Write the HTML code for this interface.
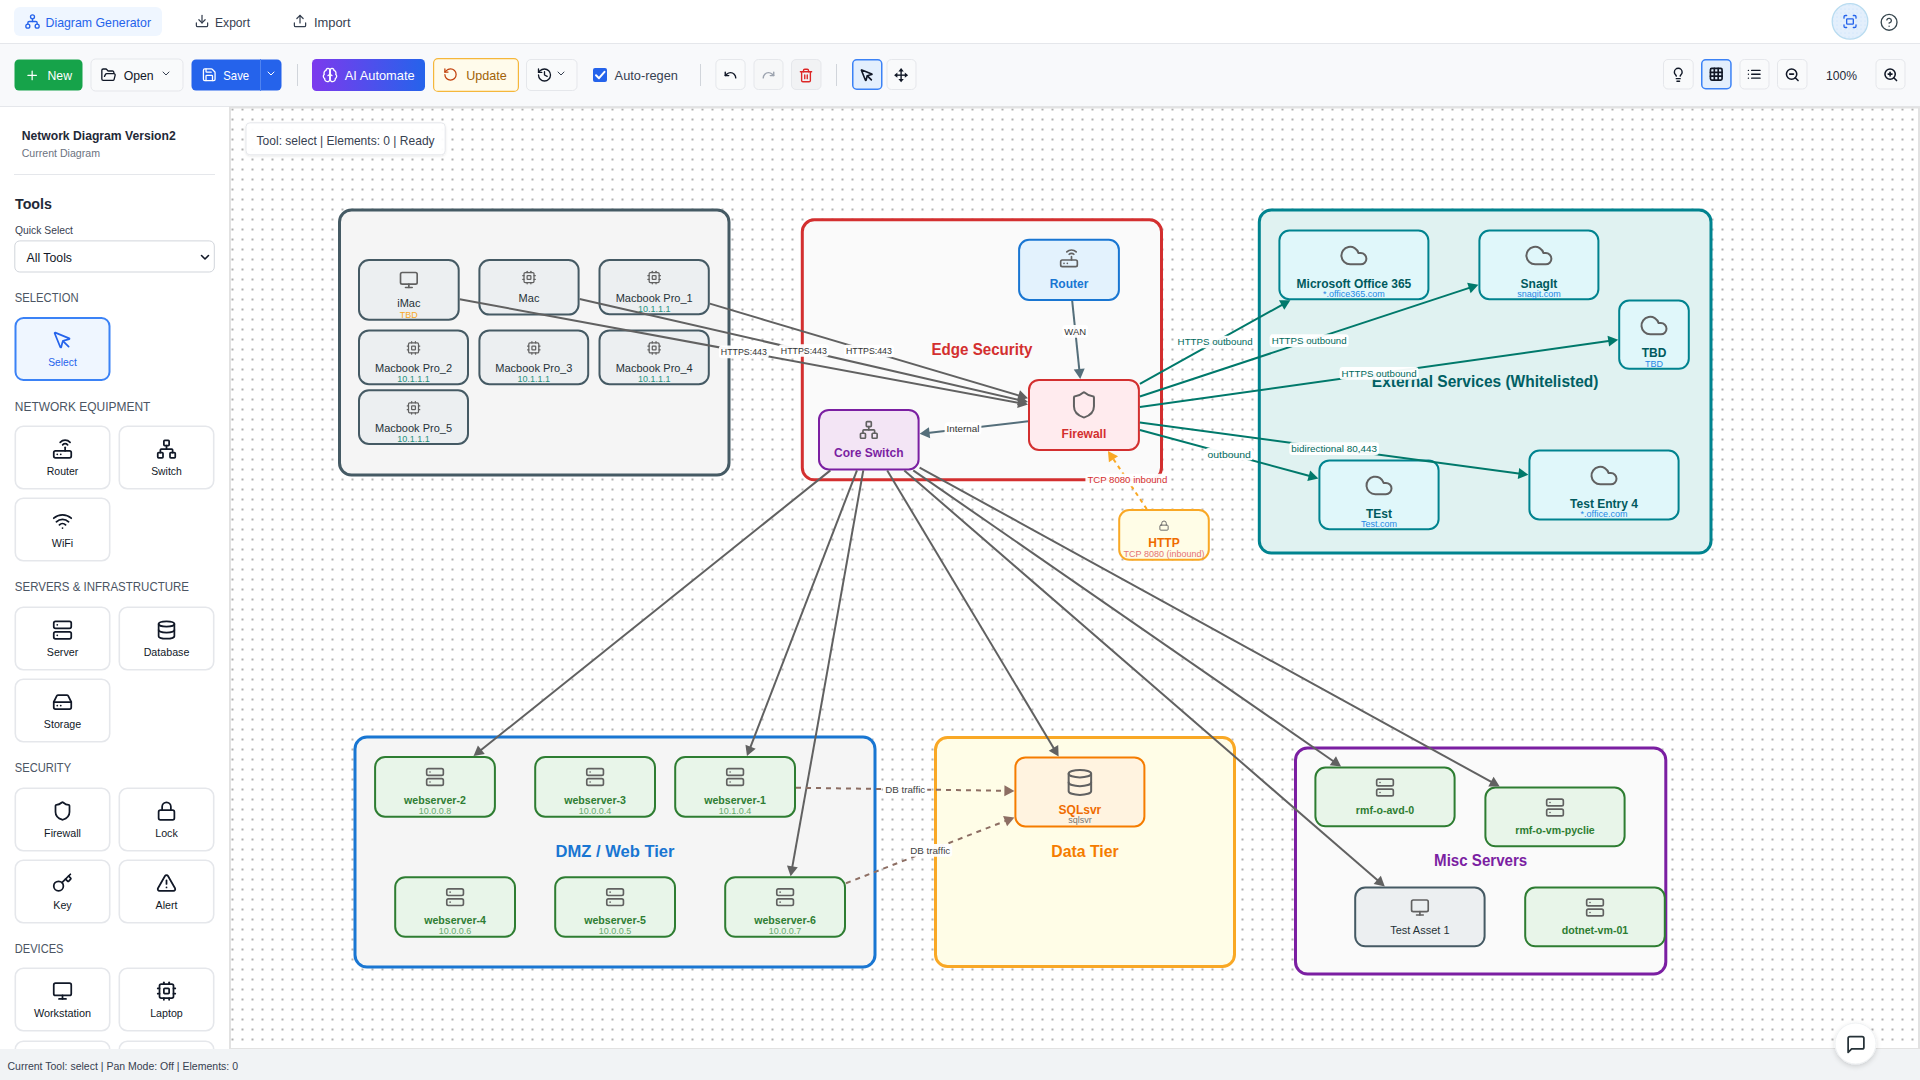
<!DOCTYPE html>
<html><head><meta charset="utf-8"><title>Diagram Generator</title><style>html,body{margin:0;padding:0;width:1920px;height:1080px;overflow:hidden;background:#fff}</style></head><body>
<svg width="1920" height="1080" viewBox="0 0 1920 1080" font-family='"Liberation Sans", sans-serif' style="display:block">
<defs>
<pattern id="dots" x="231.5" y="108.5" width="10" height="10" patternUnits="userSpaceOnUse"><circle cx="1" cy="1" r="0.9" fill="#8a8a8a"/></pattern>
<pattern id="dots2" x="0" y="0" width="4" height="4" patternUnits="userSpaceOnUse"><circle cx="1" cy="1" r="0.5" fill="#93c5fd" fill-opacity="0.5"/></pattern>
<linearGradient id="aigrad" x1="0" x2="1" y1="0" y2="0"><stop offset="0" stop-color="#7c3aed"/><stop offset="1" stop-color="#2563eb"/></linearGradient>
<filter id="sh" x="-20%" y="-20%" width="140%" height="160%"><feDropShadow dx="0" dy="1" stdDeviation="1.2" flood-color="#000" flood-opacity="0.10"/></filter>
<filter id="sh2" x="-50%" y="-50%" width="200%" height="200%"><feDropShadow dx="0" dy="2" stdDeviation="2.5" flood-color="#000" flood-opacity="0.15"/></filter>
</defs>
<rect x="0" y="0" width="1920" height="43" rx="0" fill="#ffffff" stroke="none" stroke-width="1"/>
<rect x="0" y="43" width="1920" height="1" rx="0" fill="#e5e7eb" stroke="none" stroke-width="1"/>
<rect x="0" y="44" width="1920" height="62" rx="0" fill="#f8f9fb" stroke="none" stroke-width="1"/>
<rect x="0" y="106" width="1920" height="1" rx="0" fill="#e5e7eb" stroke="none" stroke-width="1"/>
<rect x="0" y="107" width="229" height="943" rx="0" fill="#ffffff" stroke="none" stroke-width="1"/>
<rect x="0" y="1049" width="1920" height="31" rx="0" fill="#f1f3f5" stroke="none" stroke-width="1"/>
<rect x="229" y="106.5" width="1691" height="943" rx="0" fill="#e2e2e2" stroke="none" stroke-width="1"/>
<rect x="231" y="108.5" width="1687" height="939.5" rx="0" fill="#ffffff" stroke="none" stroke-width="1"/>
<rect x="231" y="108.5" width="1687" height="939.5" rx="0" fill="url(#dots)" stroke="none" stroke-width="1"/>
<rect x="14.0" y="7.0" width="148" height="29" rx="6" fill="#eff6ff" stroke="none" stroke-width="0"/>
<svg x="24.5" y="13.5" width="16" height="16" viewBox="0 0 24 24" fill="none" stroke="#2563eb" stroke-width="2" stroke-linecap="round" stroke-linejoin="round"><circle cx="12" cy="5" r="3"/><circle cx="5" cy="19" r="3"/><circle cx="19" cy="19" r="3"/><path d="M12 8v4"/><path d="M5 16v-2a2 2 0 0 1 2-2h10a2 2 0 0 1 2 2v2"/></svg>
<text x="45.5" y="27" font-size="13" fill="#2563eb" font-weight="normal" text-anchor="start" textLength="105.5" lengthAdjust="spacingAndGlyphs">Diagram Generator</text>
<svg x="194.5" y="13.5" width="15" height="15" viewBox="0 0 24 24" fill="none" stroke="#374151" stroke-width="2" stroke-linecap="round" stroke-linejoin="round"><path d="M21 15v4a2 2 0 0 1-2 2H5a2 2 0 0 1-2-2v-4"/><polyline points="7 10 12 15 17 10"/><line x1="12" x2="12" y1="15" y2="3"/></svg>
<text x="215" y="27" font-size="13" fill="#374151" font-weight="normal" text-anchor="start" textLength="35" lengthAdjust="spacingAndGlyphs">Export</text>
<svg x="292.5" y="13.5" width="15" height="15" viewBox="0 0 24 24" fill="none" stroke="#374151" stroke-width="2" stroke-linecap="round" stroke-linejoin="round"><path d="M21 15v4a2 2 0 0 1-2 2H5a2 2 0 0 1-2-2v-4"/><polyline points="17 8 12 3 7 8"/><line x1="12" x2="12" y1="3" y2="15"/></svg>
<text x="313.9" y="27" font-size="13" fill="#374151" font-weight="normal" text-anchor="start" textLength="36.6" lengthAdjust="spacingAndGlyphs">Import</text>
<circle cx="1850" cy="21.4" r="17.8" fill="#e3effc" stroke="#b9dcf0" stroke-width="1.3"/>
<circle cx="1850" cy="21.5" r="17.5" fill="url(#dots2)"/>
<svg x="1842" y="13.5" width="16" height="16" viewBox="0 0 24 24" fill="none" stroke="#2563eb" stroke-width="2" stroke-linecap="round" stroke-linejoin="round"><path d="M3 7V5a2 2 0 0 1 2-2h2"/><path d="M17 3h2a2 2 0 0 1 2 2v2"/><path d="M21 17v2a2 2 0 0 1-2 2h-2"/><path d="M7 21H5a2 2 0 0 1-2-2v-2"/><rect width="10" height="8" x="7" y="8" rx="1"/></svg>
<svg x="1879.6" y="12.8" width="19" height="19" viewBox="0 0 24 24" fill="none" stroke="#37474f" stroke-width="1.7" stroke-linecap="round" stroke-linejoin="round"><circle cx="12" cy="12" r="10"/><path d="M9.09 9a3 3 0 0 1 5.83 1c0 2-3 3-3 3"/><path d="M12 17h.01"/></svg>
<rect x="14.5" y="59.5" width="68" height="31" rx="4.5" fill="#16a34a" stroke="none" stroke-width="1"/>
<svg x="24.8" y="68" width="14.7" height="14.7" viewBox="0 0 24 24" fill="none" stroke="#ffffff" stroke-width="2" stroke-linecap="round" stroke-linejoin="round"><path d="M5 12h14"/><path d="M12 5v14"/></svg>
<text x="47.5" y="80" font-size="13" fill="#ffffff" font-weight="normal" text-anchor="start" textLength="24.5" lengthAdjust="spacingAndGlyphs">New</text>
<rect x="91.0" y="59.0" width="92.0" height="32.0" rx="4.5" fill="#f9fafb" stroke="#e5e7eb" stroke-width="1"/>
<svg x="100.5" y="67" width="16" height="16" viewBox="0 0 24 24" fill="none" stroke="#111827" stroke-width="2" stroke-linecap="round" stroke-linejoin="round"><path d="m6 14 1.5-2.9A2 2 0 0 1 9.24 10H20a2 2 0 0 1 1.94 2.5l-1.54 6a2 2 0 0 1-1.95 1.5H4a2 2 0 0 1-2-2V5a2 2 0 0 1 2-2h3.9a2 2 0 0 1 1.69.9l.81 1.2a2 2 0 0 0 1.67.9H18a2 2 0 0 1 2 2v2"/></svg>
<text x="123.7" y="80" font-size="13" fill="#111827" font-weight="normal" text-anchor="start" textLength="30" lengthAdjust="spacingAndGlyphs">Open</text>
<svg x="160" y="67.5" width="12" height="12" viewBox="0 0 24 24" fill="none" stroke="#374151" stroke-width="2" stroke-linecap="round" stroke-linejoin="round"><path d="m6 9 6 6 6-6"/></svg>
<rect x="191.5" y="59.5" width="90" height="31" rx="4.5" fill="#2563eb" stroke="none" stroke-width="1"/>
<rect x="260" y="59" width="1" height="32" rx="0" fill="#4f83f0" stroke="none" stroke-width="1"/>
<svg x="201.5" y="67" width="15.5" height="15.5" viewBox="0 0 24 24" fill="none" stroke="#ffffff" stroke-width="2" stroke-linecap="round" stroke-linejoin="round"><path d="M15.2 3a2 2 0 0 1 1.4.6l3.8 3.8a2 2 0 0 1 .6 1.4V19a2 2 0 0 1-2 2H5a2 2 0 0 1-2-2V5a2 2 0 0 1 2-2z"/><path d="M17 21v-7a1 1 0 0 0-1-1H8a1 1 0 0 0-1 1v7"/><path d="M7 3v4a1 1 0 0 0 1 1h7"/></svg>
<text x="223.3" y="80" font-size="13" fill="#ffffff" font-weight="normal" text-anchor="start" textLength="25.9" lengthAdjust="spacingAndGlyphs">Save</text>
<svg x="265" y="67.5" width="12" height="12" viewBox="0 0 24 24" fill="none" stroke="#ffffff" stroke-width="2" stroke-linecap="round" stroke-linejoin="round"><path d="m6 9 6 6 6-6"/></svg>
<rect x="297" y="64" width="1" height="22" rx="0" fill="#d1d5db" stroke="none" stroke-width="1"/>
<rect x="312" y="59" width="113" height="32" rx="4.5" fill="url(#aigrad)"/>
<svg x="322" y="67" width="16" height="16" viewBox="0 0 24 24" fill="none" stroke="#ffffff" stroke-width="2" stroke-linecap="round" stroke-linejoin="round"><path d="M12 5a3 3 0 1 0-5.997.125 4 4 0 0 0-2.526 5.77 4 4 0 0 0 .556 6.588A4 4 0 1 0 12 18Z"/><path d="M12 5a3 3 0 1 1 5.997.125 4 4 0 0 1 2.526 5.77 4 4 0 0 1-.556 6.588A4 4 0 1 1 12 18Z"/><path d="M15 13a4.5 4.5 0 0 1-3-4 4.5 4.5 0 0 1-3 4"/><path d="M12 5v13"/></svg>
<text x="344.8" y="80" font-size="13" fill="#ffffff" font-weight="normal" text-anchor="start" textLength="69.8" lengthAdjust="spacingAndGlyphs">AI Automate</text>
<rect x="433.6" y="58.6" width="84.8" height="32.8" rx="4.5" fill="#fffbeb" stroke="#f5b73b" stroke-width="1.2"/>
<svg x="443" y="67" width="15" height="15" viewBox="0 0 24 24" fill="none" stroke="#c2410c" stroke-width="2" stroke-linecap="round" stroke-linejoin="round"><path d="M3 12a9 9 0 1 0 9-9 9.75 9.75 0 0 0-6.74 2.74L3 8"/><path d="M3 3v5h5"/></svg>
<text x="466.25" y="80" font-size="13" fill="#a16207" font-weight="normal" text-anchor="start" textLength="40.5" lengthAdjust="spacingAndGlyphs">Update</text>
<rect x="526.5" y="59.5" width="50.5" height="31" rx="4.5" fill="#f9fafb" stroke="#e5e7eb" stroke-width="1"/>
<svg x="536.5" y="67" width="16" height="16" viewBox="0 0 24 24" fill="none" stroke="#111827" stroke-width="2" stroke-linecap="round" stroke-linejoin="round"><path d="M3 12a9 9 0 1 0 9-9 9.75 9.75 0 0 0-6.74 2.74L3 8"/><path d="M3 3v5h5"/><path d="M12 7v5l4 2"/></svg>
<svg x="555" y="67.5" width="12" height="12" viewBox="0 0 24 24" fill="none" stroke="#374151" stroke-width="2" stroke-linecap="round" stroke-linejoin="round"><path d="m6 9 6 6 6-6"/></svg>
<rect x="593.0" y="68.0" width="14" height="14" rx="2" fill="#2563eb" stroke="none" stroke-width="0"/>
<path d="M596 75.2 L599 78.2 L604.5 71.8" fill="none" stroke="#fff" stroke-width="2" stroke-linecap="round" stroke-linejoin="round"/>
<text x="614.6" y="80" font-size="13" fill="#374151" font-weight="normal" text-anchor="start" textLength="63.4" lengthAdjust="spacingAndGlyphs">Auto-regen</text>
<rect x="700" y="64" width="1" height="22" rx="0" fill="#d1d5db" stroke="none" stroke-width="1"/>
<rect x="715.9" y="59.5" width="29.200000000000045" height="30" rx="4.5" fill="#f9fafb" stroke="#e5e7eb" stroke-width="1"/>
<svg x="723.5" y="68" width="14" height="14" viewBox="0 0 24 24" fill="none" stroke="#111827" stroke-width="2.4" stroke-linecap="round" stroke-linejoin="round"><path d="M3 7v6h6"/><path d="M21 17a9 9 0 0 0-9-9 9 9 0 0 0-6 2.3L3 13"/></svg>
<rect x="754.0" y="59.5" width="29.0" height="30" rx="4.5" fill="#f6f7f8" stroke="#e5e7eb" stroke-width="1"/>
<svg x="761.5" y="68" width="14" height="14" viewBox="0 0 24 24" fill="none" stroke="#9ca3af" stroke-width="2.4" stroke-linecap="round" stroke-linejoin="round"><path d="M21 7v6h-6"/><path d="M3 17a9 9 0 0 1 9-9 9 9 0 0 1 6 2.3l3 2.7"/></svg>
<rect x="791.5" y="59.5" width="29.5" height="30" rx="4.5" fill="#f1f2f4" stroke="#e5e7eb" stroke-width="1"/>
<svg x="798.5" y="68" width="15" height="15" viewBox="0 0 24 24" fill="none" stroke="#dc2626" stroke-width="2.2" stroke-linecap="round" stroke-linejoin="round"><path d="M3 6h18"/><path d="M19 6v14c0 1-1 2-2 2H7c-1 0-2-1-2-2V6"/><path d="M8 6V4c0-1 1-2 2-2h4c1 0 2 1 2 2v2"/><line x1="10" x2="10" y1="11" y2="17"/><line x1="14" x2="14" y1="11" y2="17"/></svg>
<rect x="836" y="64" width="1" height="22" rx="0" fill="#d1d5db" stroke="none" stroke-width="1"/>
<rect x="852.75" y="59.75" width="29.0" height="29.5" rx="4" fill="#e3effd" stroke="#3b82f6" stroke-width="1.5"/>
<svg x="859.5" y="68" width="15" height="15" viewBox="0 0 24 24" fill="none" stroke="#111827" stroke-width="2.6" stroke-linecap="round" stroke-linejoin="round"><path d="M12.586 12.586 19 19"/><path d="M3.688 3.037a.497.497 0 0 0-.651.651l6.5 15.999a.501.501 0 0 0 .947-.062l1.569-6.083a2 2 0 0 1 1.448-1.479l6.124-1.579a.5.5 0 0 0 .063-.947z"/></svg>
<rect x="887.0" y="59.5" width="29.0" height="30" rx="4.5" fill="#f9fafb" stroke="#e5e7eb" stroke-width="1"/>
<g fill="#111827" stroke="#111827" stroke-width="1.4"><line x1="901.1" y1="70" x2="901.1" y2="80.3"/><line x1="895.9" y1="75.15" x2="906.3" y2="75.15"/></g><g fill="#111827"><polygon points="901.1,68.1 898.4,71.4 903.8,71.4"/><polygon points="901.1,82.2 898.4,78.9 903.8,78.9"/><polygon points="894.1,75.15 897.4,72.45 897.4,77.85"/><polygon points="908.1,75.15 904.8,72.45 904.8,77.85"/></g>
<rect x="1663.5" y="59.5" width="29.700000000000045" height="29.5" rx="4.5" fill="#f9fafb" stroke="#e5e7eb" stroke-width="1"/>
<svg x="1670.5" y="67" width="15.5" height="15.5" viewBox="0 0 24 24" fill="none" stroke="#111827" stroke-width="2.2" stroke-linecap="round" stroke-linejoin="round"><path d="M15 14c.2-1 .7-1.7 1.5-2.5 1-.9 1.5-2.2 1.5-3.5A6 6 0 0 0 6 8c0 1 .2 2.2 1.5 3.5.7.7 1.3 1.5 1.5 2.5"/><path d="M9 18h6"/><path d="M10 22h4"/></svg>
<rect x="1701.75" y="59.75" width="29.200000000000045" height="29.0" rx="4" fill="#e3effd" stroke="#3b82f6" stroke-width="1.5"/>
<svg x="1708.5" y="66.5" width="15.5" height="15.5" viewBox="0 0 24 24" fill="none" stroke="#111827" stroke-width="2.6" stroke-linecap="round" stroke-linejoin="round"><rect width="18" height="18" x="3" y="3" rx="2"/><path d="M3 9h18"/><path d="M3 15h18"/><path d="M9 3v18"/><path d="M15 3v18"/></svg>
<rect x="1740.0" y="59.5" width="29.0" height="29.5" rx="4.5" fill="#f9fafb" stroke="#e5e7eb" stroke-width="1"/>
<svg x="1746.5" y="66.5" width="15.5" height="15.5" viewBox="0 0 24 24" fill="none" stroke="#111827" stroke-width="2.2" stroke-linecap="round" stroke-linejoin="round"><path d="M3 12h.01"/><path d="M3 18h.01"/><path d="M3 6h.01"/><path d="M8 12h13"/><path d="M8 18h13"/><path d="M8 6h13"/></svg>
<rect x="1777.5" y="59.5" width="29.5" height="29.5" rx="4.5" fill="#f9fafb" stroke="#e5e7eb" stroke-width="1"/>
<svg x="1784.5" y="67" width="15.5" height="15.5" viewBox="0 0 24 24" fill="none" stroke="#111827" stroke-width="2.4" stroke-linecap="round" stroke-linejoin="round"><circle cx="11" cy="11" r="8"/><line x1="21" x2="16.65" y1="21" y2="16.65"/><line x1="8" x2="14" y1="11" y2="11"/></svg>
<text x="1826" y="80" font-size="13" fill="#1f2937" font-weight="normal" text-anchor="start" textLength="31" lengthAdjust="spacingAndGlyphs">100%</text>
<rect x="1876.0" y="59.5" width="29.0" height="29.5" rx="4.5" fill="#f9fafb" stroke="#e5e7eb" stroke-width="1"/>
<svg x="1883" y="67" width="15.5" height="15.5" viewBox="0 0 24 24" fill="none" stroke="#111827" stroke-width="2.4" stroke-linecap="round" stroke-linejoin="round"><circle cx="11" cy="11" r="8"/><line x1="21" x2="16.65" y1="21" y2="16.65"/><line x1="11" x2="11" y1="8" y2="14"/><line x1="8" x2="14" y1="11" y2="11"/></svg>
<text x="21.7" y="140" font-size="13.5" fill="#1f2937" font-weight="bold" text-anchor="start" textLength="154" lengthAdjust="spacingAndGlyphs">Network Diagram Version2</text>
<text x="21.7" y="157" font-size="11" fill="#6b7280" font-weight="normal" text-anchor="start" textLength="78.3" lengthAdjust="spacingAndGlyphs">Current Diagram</text>
<rect x="14" y="174" width="201" height="1" rx="0" fill="#e5e7eb" stroke="none" stroke-width="1"/>
<text x="15" y="209" font-size="15.5" fill="#1f2937" font-weight="bold" text-anchor="start" textLength="37" lengthAdjust="spacingAndGlyphs">Tools</text>
<text x="15" y="234" font-size="11.6" fill="#374151" font-weight="normal" text-anchor="start" textLength="58" lengthAdjust="spacingAndGlyphs">Quick Select</text>
<rect x="14.8" y="240.9" width="199.5" height="31.099999999999994" rx="5" fill="#ffffff" stroke="#d1d5db" stroke-width="1"/>
<text x="26.5" y="262" font-size="13.5" fill="#111827" font-weight="normal" text-anchor="start" textLength="45.5" lengthAdjust="spacingAndGlyphs">All Tools</text>
<path d="M201.5 255.5 L205 259 L208.5 255.5" fill="none" stroke="#111827" stroke-width="1.6" stroke-linecap="round" stroke-linejoin="round"/>
<text x="14.8" y="301.8" font-size="13" fill="#4b5563" font-weight="normal" text-anchor="start" textLength="63.7" lengthAdjust="spacingAndGlyphs">SELECTION</text>
<rect x="15.5" y="318.0" width="94.0" height="62" rx="8" fill="#eff6ff" stroke="#3b82f6" stroke-width="2"/>
<svg x="52.0" y="330" width="21" height="21" viewBox="0 0 24 24" fill="none" stroke="#2563eb" stroke-width="2" stroke-linecap="round" stroke-linejoin="round"><path d="M12.586 12.586 19 19"/><path d="M3.688 3.037a.497.497 0 0 0-.651.651l6.5 15.999a.501.501 0 0 0 .947-.062l1.569-6.083a2 2 0 0 1 1.448-1.479l6.124-1.579a.5.5 0 0 0 .063-.947z"/></svg>
<text x="62.5" y="366.2" font-size="11.3" fill="#2563eb" font-weight="normal" text-anchor="middle" textLength="28.5" lengthAdjust="spacingAndGlyphs">Select</text>
<text x="14.8" y="410.8" font-size="13" fill="#4b5563" font-weight="normal" text-anchor="start" textLength="135.6" lengthAdjust="spacingAndGlyphs">NETWORK EQUIPMENT</text>
<rect x="15.3" y="426.3" width="94.4" height="62.4" rx="8" fill="#ffffff" stroke="#e5e7eb" stroke-width="1.6"/>
<svg x="52.0" y="438.5" width="21" height="21" viewBox="0 0 24 24" fill="none" stroke="#111827" stroke-width="2" stroke-linecap="round" stroke-linejoin="round"><rect width="20" height="8" x="2" y="14" rx="2"/><path d="M6.01 18H6"/><path d="M10.01 18H10"/><path d="M15 10v4"/><path d="M17.84 7.17a4 4 0 0 0-5.66 0"/><path d="M20.66 4.34a8 8 0 0 0-11.31 0"/></svg>
<text x="62.5" y="474.7" font-size="11.3" fill="#111827" font-weight="normal" text-anchor="middle" textLength="31.5" lengthAdjust="spacingAndGlyphs">Router</text>
<rect x="119.3" y="426.3" width="94.4" height="62.4" rx="8" fill="#ffffff" stroke="#e5e7eb" stroke-width="1.6"/>
<svg x="156.0" y="438.5" width="21" height="21" viewBox="0 0 24 24" fill="none" stroke="#111827" stroke-width="2" stroke-linecap="round" stroke-linejoin="round"><rect x="16" y="16" width="6" height="6" rx="1"/><rect x="2" y="16" width="6" height="6" rx="1"/><rect x="9" y="2" width="6" height="6" rx="1"/><path d="M5 16v-3a1 1 0 0 1 1-1h12a1 1 0 0 1 1 1v3"/><path d="M12 12V8"/></svg>
<text x="166.5" y="474.7" font-size="11.3" fill="#111827" font-weight="normal" text-anchor="middle" textLength="30.6" lengthAdjust="spacingAndGlyphs">Switch</text>
<rect x="15.3" y="498.3" width="94.4" height="62.4" rx="8" fill="#ffffff" stroke="#e5e7eb" stroke-width="1.6"/>
<svg x="52.0" y="510.5" width="21" height="21" viewBox="0 0 24 24" fill="none" stroke="#111827" stroke-width="2" stroke-linecap="round" stroke-linejoin="round"><path d="M12 20h.01"/><path d="M2 8.82a15 15 0 0 1 20 0"/><path d="M5 12.859a10 10 0 0 1 14 0"/><path d="M8.5 16.429a5 5 0 0 1 7 0"/></svg>
<text x="62.5" y="546.7" font-size="11.3" fill="#111827" font-weight="normal" text-anchor="middle" textLength="21.35" lengthAdjust="spacingAndGlyphs">WiFi</text>
<text x="14.8" y="591" font-size="13" fill="#4b5563" font-weight="normal" text-anchor="start" textLength="174.2" lengthAdjust="spacingAndGlyphs">SERVERS &amp; INFRASTRUCTURE</text>
<rect x="15.3" y="607.3" width="94.4" height="62.4" rx="8" fill="#ffffff" stroke="#e5e7eb" stroke-width="1.6"/>
<svg x="52.0" y="619.5" width="21" height="21" viewBox="0 0 24 24" fill="none" stroke="#111827" stroke-width="2" stroke-linecap="round" stroke-linejoin="round"><rect width="20" height="8" x="2" y="2" rx="2" ry="2"/><rect width="20" height="8" x="2" y="14" rx="2" ry="2"/><line x1="6" x2="6.01" y1="6" y2="6"/><line x1="6" x2="6.01" y1="18" y2="18"/></svg>
<text x="62.5" y="655.7" font-size="11.3" fill="#111827" font-weight="normal" text-anchor="middle" textLength="31.45" lengthAdjust="spacingAndGlyphs">Server</text>
<rect x="119.3" y="607.3" width="94.4" height="62.4" rx="8" fill="#ffffff" stroke="#e5e7eb" stroke-width="1.6"/>
<svg x="156.0" y="619.5" width="21" height="21" viewBox="0 0 24 24" fill="none" stroke="#111827" stroke-width="2" stroke-linecap="round" stroke-linejoin="round"><ellipse cx="12" cy="5" rx="9" ry="3"/><path d="M3 5V19A9 3 0 0 0 21 19V5"/><path d="M3 12A9 3 0 0 0 21 12"/></svg>
<text x="166.5" y="655.7" font-size="11.3" fill="#111827" font-weight="normal" text-anchor="middle" textLength="45.71" lengthAdjust="spacingAndGlyphs">Database</text>
<rect x="15.3" y="679.3" width="94.4" height="62.4" rx="8" fill="#ffffff" stroke="#e5e7eb" stroke-width="1.6"/>
<svg x="52.0" y="691.5" width="21" height="21" viewBox="0 0 24 24" fill="none" stroke="#111827" stroke-width="2" stroke-linecap="round" stroke-linejoin="round"><line x1="22" x2="2" y1="12" y2="12"/><path d="M5.45 5.11 2 12v6a2 2 0 0 0 2 2h16a2 2 0 0 0 2-2v-6l-3.45-6.89A2 2 0 0 0 16.76 4H7.24a2 2 0 0 0-1.79 1.11z"/><line x1="6" x2="6.01" y1="16" y2="16"/><line x1="10" x2="10.01" y1="16" y2="16"/></svg>
<text x="62.5" y="727.7" font-size="11.3" fill="#111827" font-weight="normal" text-anchor="middle" textLength="37.4" lengthAdjust="spacingAndGlyphs">Storage</text>
<text x="14.8" y="772" font-size="13" fill="#4b5563" font-weight="normal" text-anchor="start" textLength="56.3" lengthAdjust="spacingAndGlyphs">SECURITY</text>
<rect x="15.3" y="788.3" width="94.4" height="62.4" rx="8" fill="#ffffff" stroke="#e5e7eb" stroke-width="1.6"/>
<svg x="52.0" y="800.5" width="21" height="21" viewBox="0 0 24 24" fill="none" stroke="#111827" stroke-width="2" stroke-linecap="round" stroke-linejoin="round"><path d="M20 13c0 5-3.5 7.5-7.66 8.95a1 1 0 0 1-.67-.01C7.5 20.5 4 18 4 13V6a1 1 0 0 1 1-1c2 0 4.5-1.2 6.24-2.72a1.17 1.17 0 0 1 1.52 0C14.51 3.81 17 5 19 5a1 1 0 0 1 1 1z"/></svg>
<text x="62.5" y="836.7" font-size="11.3" fill="#111827" font-weight="normal" text-anchor="middle" textLength="36.78" lengthAdjust="spacingAndGlyphs">Firewall</text>
<rect x="119.3" y="788.3" width="94.4" height="62.4" rx="8" fill="#ffffff" stroke="#e5e7eb" stroke-width="1.6"/>
<svg x="156.0" y="800.5" width="21" height="21" viewBox="0 0 24 24" fill="none" stroke="#111827" stroke-width="2" stroke-linecap="round" stroke-linejoin="round"><rect width="18" height="11" x="3" y="11" rx="2" ry="2"/><path d="M7 11V7a5 5 0 0 1 10 0v4"/></svg>
<text x="166.5" y="836.7" font-size="11.3" fill="#111827" font-weight="normal" text-anchor="middle" textLength="22.55" lengthAdjust="spacingAndGlyphs">Lock</text>
<rect x="15.3" y="860.3" width="94.4" height="62.4" rx="8" fill="#ffffff" stroke="#e5e7eb" stroke-width="1.6"/>
<svg x="52.0" y="872.5" width="21" height="21" viewBox="0 0 24 24" fill="none" stroke="#111827" stroke-width="2" stroke-linecap="round" stroke-linejoin="round"><path d="m15.5 7.5 2.3 2.3a1 1 0 0 0 1.4 0l2.1-2.1a1 1 0 0 0 0-1.4L19 4"/><path d="m21 2-9.6 9.6"/><circle cx="7.5" cy="15.5" r="5.5"/></svg>
<text x="62.5" y="908.7" font-size="11.3" fill="#111827" font-weight="normal" text-anchor="middle" textLength="18.4" lengthAdjust="spacingAndGlyphs">Key</text>
<rect x="119.3" y="860.3" width="94.4" height="62.4" rx="8" fill="#ffffff" stroke="#e5e7eb" stroke-width="1.6"/>
<svg x="156.0" y="872.5" width="21" height="21" viewBox="0 0 24 24" fill="none" stroke="#111827" stroke-width="2" stroke-linecap="round" stroke-linejoin="round"><path d="m21.73 18-8-14a2 2 0 0 0-3.48 0l-8 14A2 2 0 0 0 4 21h16a2 2 0 0 0 1.73-3"/><path d="M12 9v4"/><path d="M12 17h.01"/></svg>
<text x="166.5" y="908.7" font-size="11.3" fill="#111827" font-weight="normal" text-anchor="middle" textLength="21.96" lengthAdjust="spacingAndGlyphs">Alert</text>
<text x="14.8" y="953" font-size="13" fill="#4b5563" font-weight="normal" text-anchor="start" textLength="48.6" lengthAdjust="spacingAndGlyphs">DEVICES</text>
<rect x="15.3" y="968.3" width="94.4" height="62.4" rx="8" fill="#ffffff" stroke="#e5e7eb" stroke-width="1.6"/>
<svg x="52.0" y="980.5" width="21" height="21" viewBox="0 0 24 24" fill="none" stroke="#111827" stroke-width="2" stroke-linecap="round" stroke-linejoin="round"><rect width="20" height="14" x="2" y="3" rx="2"/><line x1="8" x2="16" y1="21" y2="21"/><line x1="12" x2="12" y1="17" y2="21"/></svg>
<text x="62.5" y="1016.7" font-size="11.3" fill="#111827" font-weight="normal" text-anchor="middle" textLength="57.2" lengthAdjust="spacingAndGlyphs">Workstation</text>
<rect x="119.3" y="968.3" width="94.4" height="62.4" rx="8" fill="#ffffff" stroke="#e5e7eb" stroke-width="1.6"/>
<svg x="156.0" y="980.5" width="21" height="21" viewBox="0 0 24 24" fill="none" stroke="#111827" stroke-width="2" stroke-linecap="round" stroke-linejoin="round"><rect width="16" height="16" x="4" y="4" rx="2"/><rect width="6" height="6" x="9" y="9" rx="1"/><path d="M15 2v2"/><path d="M15 20v2"/><path d="M2 15h2"/><path d="M2 9h2"/><path d="M20 15h2"/><path d="M20 9h2"/><path d="M9 2v2"/><path d="M9 20v2"/></svg>
<text x="166.5" y="1016.7" font-size="11.3" fill="#111827" font-weight="normal" text-anchor="middle" textLength="32.66" lengthAdjust="spacingAndGlyphs">Laptop</text>
<rect x="15.3" y="1041.3" width="94.4" height="62.4" rx="8" fill="#ffffff" stroke="#e5e7eb" stroke-width="1.6"/>
<rect x="119.3" y="1041.3" width="94.4" height="62.4" rx="8" fill="#ffffff" stroke="#e5e7eb" stroke-width="1.6"/>
<rect x="0" y="1049" width="229" height="31" rx="0" fill="#f1f3f5" stroke="none" stroke-width="1"/>
<rect x="229" y="1049" width="1691" height="31" rx="0" fill="#f1f3f5" stroke="none" stroke-width="1"/>
<text x="7.5" y="1069.7" font-size="10.9" fill="#374151" font-weight="normal" text-anchor="start" textLength="230.5" lengthAdjust="spacingAndGlyphs">Current Tool: select | Pan Mode: Off | Elements: 0</text>
<rect x="339.5" y="210.0" width="389.5" height="265.0" rx="12" fill="#f5f5f5" stroke="#455a64" stroke-width="3"/>
<rect x="802.3" y="219.8" width="359.20000000000005" height="260.0" rx="12" fill="#fafafa" stroke="#d32f2f" stroke-width="3"/>
<rect x="1259.3" y="210.0" width="451.70000000000005" height="343.0" rx="12" fill="#e0f2f1" stroke="#00838f" stroke-width="3"/>
<rect x="355.0" y="737.0" width="520.0" height="230.0" rx="12" fill="#f5f5f5" stroke="#1976d2" stroke-width="3"/>
<rect x="935.5" y="737.5" width="299" height="229" rx="12" fill="#fffde7" stroke="#f9a825" stroke-width="3"/>
<rect x="1295.5" y="748.0" width="370.29999999999995" height="226.0" rx="12" fill="#fafafa" stroke="#7b1fa2" stroke-width="3"/>
<text x="981.9" y="354.9" font-size="16" fill="#d32f2f" font-weight="bold" text-anchor="middle" textLength="100.9" lengthAdjust="spacingAndGlyphs">Edge Security</text>
<text x="1485.15" y="386.5" font-size="16" fill="#006064" font-weight="bold" text-anchor="middle" textLength="226.6" lengthAdjust="spacingAndGlyphs">External Services (Whitelisted)</text>
<text x="615.0" y="856.9" font-size="16" fill="#1976d2" font-weight="bold" text-anchor="middle" textLength="119" lengthAdjust="spacingAndGlyphs">DMZ / Web Tier</text>
<text x="1085.0" y="856.8" font-size="16" fill="#f57c00" font-weight="bold" text-anchor="middle" textLength="67.3" lengthAdjust="spacingAndGlyphs">Data Tier</text>
<text x="1480.65" y="866" font-size="16" fill="#7b1fa2" font-weight="bold" text-anchor="middle" textLength="93.1" lengthAdjust="spacingAndGlyphs">Misc Servers</text>
<rect x="359.0" y="260.0" width="99.69999999999999" height="59.69999999999999" rx="10" fill="#eceff1" stroke="#455a64" stroke-width="2"/>
<svg x="398.85" y="270" width="20" height="20" viewBox="0 0 24 24" fill="none" stroke="#616161" stroke-width="2" stroke-linecap="round" stroke-linejoin="round"><rect width="20" height="14" x="2" y="3" rx="2"/><line x1="8" x2="16" y1="21" y2="21"/><line x1="12" x2="12" y1="17" y2="21"/></svg>
<text x="408.85" y="307.2" font-size="11" fill="#263238" font-weight="normal" text-anchor="middle">iMac</text>
<text x="408.85" y="317.7" font-size="9" fill="#f9a825" font-weight="normal" text-anchor="middle">TBD</text>
<rect x="479.4" y="260.0" width="99.20000000000005" height="54.60000000000002" rx="10" fill="#eceff1" stroke="#455a64" stroke-width="2"/>
<svg x="521.5" y="270" width="15" height="15" viewBox="0 0 24 24" fill="none" stroke="#616161" stroke-width="2" stroke-linecap="round" stroke-linejoin="round"><rect width="16" height="16" x="4" y="4" rx="2"/><rect width="6" height="6" x="9" y="9" rx="1"/><path d="M15 2v2"/><path d="M15 20v2"/><path d="M2 15h2"/><path d="M2 9h2"/><path d="M20 15h2"/><path d="M20 9h2"/><path d="M9 2v2"/><path d="M9 20v2"/></svg>
<text x="529.0" y="302.3" font-size="11" fill="#263238" font-weight="normal" text-anchor="middle">Mac</text>
<rect x="599.5" y="260.0" width="109.29999999999995" height="54.19999999999999" rx="10" fill="#eceff1" stroke="#455a64" stroke-width="2"/>
<svg x="646.65" y="270" width="15" height="15" viewBox="0 0 24 24" fill="none" stroke="#616161" stroke-width="2" stroke-linecap="round" stroke-linejoin="round"><rect width="16" height="16" x="4" y="4" rx="2"/><rect width="6" height="6" x="9" y="9" rx="1"/><path d="M15 2v2"/><path d="M15 20v2"/><path d="M2 15h2"/><path d="M2 9h2"/><path d="M20 15h2"/><path d="M20 9h2"/><path d="M9 2v2"/><path d="M9 20v2"/></svg>
<text x="654.15" y="301.7" font-size="11" fill="#263238" font-weight="normal" text-anchor="middle">Macbook Pro_1</text>
<text x="654.15" y="312.2" font-size="9" fill="#26917f" font-weight="normal" text-anchor="middle">10.1.1.1</text>
<rect x="359.0" y="330.4" width="109" height="53.80000000000001" rx="10" fill="#eceff1" stroke="#455a64" stroke-width="2"/>
<svg x="406.0" y="340.4" width="15" height="15" viewBox="0 0 24 24" fill="none" stroke="#616161" stroke-width="2" stroke-linecap="round" stroke-linejoin="round"><rect width="16" height="16" x="4" y="4" rx="2"/><rect width="6" height="6" x="9" y="9" rx="1"/><path d="M15 2v2"/><path d="M15 20v2"/><path d="M2 15h2"/><path d="M2 9h2"/><path d="M20 15h2"/><path d="M20 9h2"/><path d="M9 2v2"/><path d="M9 20v2"/></svg>
<text x="413.5" y="371.7" font-size="11" fill="#263238" font-weight="normal" text-anchor="middle">Macbook Pro_2</text>
<text x="413.5" y="382.2" font-size="9" fill="#26917f" font-weight="normal" text-anchor="middle">10.1.1.1</text>
<rect x="479.4" y="330.4" width="108.80000000000007" height="53.80000000000001" rx="10" fill="#eceff1" stroke="#455a64" stroke-width="2"/>
<svg x="526.3" y="340.4" width="15" height="15" viewBox="0 0 24 24" fill="none" stroke="#616161" stroke-width="2" stroke-linecap="round" stroke-linejoin="round"><rect width="16" height="16" x="4" y="4" rx="2"/><rect width="6" height="6" x="9" y="9" rx="1"/><path d="M15 2v2"/><path d="M15 20v2"/><path d="M2 15h2"/><path d="M2 9h2"/><path d="M20 15h2"/><path d="M20 9h2"/><path d="M9 2v2"/><path d="M9 20v2"/></svg>
<text x="533.8" y="371.7" font-size="11" fill="#263238" font-weight="normal" text-anchor="middle">Macbook Pro_3</text>
<text x="533.8" y="382.2" font-size="9" fill="#26917f" font-weight="normal" text-anchor="middle">10.1.1.1</text>
<rect x="599.5" y="330.4" width="109.29999999999995" height="53.80000000000001" rx="10" fill="#eceff1" stroke="#455a64" stroke-width="2"/>
<svg x="646.65" y="340.4" width="15" height="15" viewBox="0 0 24 24" fill="none" stroke="#616161" stroke-width="2" stroke-linecap="round" stroke-linejoin="round"><rect width="16" height="16" x="4" y="4" rx="2"/><rect width="6" height="6" x="9" y="9" rx="1"/><path d="M15 2v2"/><path d="M15 20v2"/><path d="M2 15h2"/><path d="M2 9h2"/><path d="M20 15h2"/><path d="M20 9h2"/><path d="M9 2v2"/><path d="M9 20v2"/></svg>
<text x="654.15" y="371.7" font-size="11" fill="#263238" font-weight="normal" text-anchor="middle">Macbook Pro_4</text>
<text x="654.15" y="382.2" font-size="9" fill="#26917f" font-weight="normal" text-anchor="middle">10.1.1.1</text>
<rect x="359.0" y="390.3" width="109" height="53.69999999999999" rx="10" fill="#eceff1" stroke="#455a64" stroke-width="2"/>
<svg x="406.0" y="400.3" width="15" height="15" viewBox="0 0 24 24" fill="none" stroke="#616161" stroke-width="2" stroke-linecap="round" stroke-linejoin="round"><rect width="16" height="16" x="4" y="4" rx="2"/><rect width="6" height="6" x="9" y="9" rx="1"/><path d="M15 2v2"/><path d="M15 20v2"/><path d="M2 15h2"/><path d="M2 9h2"/><path d="M20 15h2"/><path d="M20 9h2"/><path d="M9 2v2"/><path d="M9 20v2"/></svg>
<text x="413.5" y="431.5" font-size="11" fill="#263238" font-weight="normal" text-anchor="middle">Macbook Pro_5</text>
<text x="413.5" y="442" font-size="9" fill="#26917f" font-weight="normal" text-anchor="middle">10.1.1.1</text>
<rect x="1019.1" y="239.8" width="99.80000000000007" height="60.099999999999966" rx="10" fill="#e3f2fd" stroke="#1976d2" stroke-width="2"/>
<svg x="1059.0" y="248.3" width="20" height="20" viewBox="0 0 24 24" fill="none" stroke="#616161" stroke-width="2" stroke-linecap="round" stroke-linejoin="round"><rect width="20" height="8" x="2" y="14" rx="2"/><path d="M6.01 18H6"/><path d="M10.01 18H10"/><path d="M15 10v4"/><path d="M17.84 7.17a4 4 0 0 0-5.66 0"/><path d="M20.66 4.34a8 8 0 0 0-11.31 0"/></svg>
<text x="1069.0" y="287.6" font-size="12" fill="#1976d2" font-weight="bold" text-anchor="middle">Router</text>
<rect x="1029.0" y="379.9" width="109.90000000000009" height="70.0" rx="10" fill="#ffebee" stroke="#d32f2f" stroke-width="2"/>
<svg x="1068.95" y="389.9" width="30" height="30" viewBox="0 0 24 24" fill="none" stroke="#616161" stroke-width="1.6" stroke-linecap="round" stroke-linejoin="round"><path d="M20 13c0 5-3.5 7.5-7.66 8.95a1 1 0 0 1-.67-.01C7.5 20.5 4 18 4 13V6a1 1 0 0 1 1-1c2 0 4.5-1.2 6.24-2.72a1.17 1.17 0 0 1 1.52 0C14.51 3.81 17 5 19 5a1 1 0 0 1 1 1z"/></svg>
<text x="1083.95" y="437.6" font-size="12" fill="#d32f2f" font-weight="bold" text-anchor="middle">Firewall</text>
<rect x="819.0" y="409.9" width="99.60000000000002" height="59.5" rx="10" fill="#f3e5f5" stroke="#7b1fa2" stroke-width="2"/>
<svg x="858.8" y="419.9" width="20" height="20" viewBox="0 0 24 24" fill="none" stroke="#616161" stroke-width="2" stroke-linecap="round" stroke-linejoin="round"><rect x="16" y="16" width="6" height="6" rx="1"/><rect x="2" y="16" width="6" height="6" rx="1"/><rect x="9" y="2" width="6" height="6" rx="1"/><path d="M5 16v-3a1 1 0 0 1 1-1h12a1 1 0 0 1 1 1v3"/><path d="M12 12V8"/></svg>
<text x="868.8" y="457.1" font-size="12" fill="#7b1fa2" font-weight="bold" text-anchor="middle">Core Switch</text>
<rect x="1119.2" y="510.1" width="89.59999999999991" height="49.69999999999993" rx="10" fill="#fffde7" stroke="#f9a825" stroke-width="2"/>
<svg x="1158.5" y="520.1" width="11" height="11" viewBox="0 0 24 24" fill="none" stroke="#616161" stroke-width="2" stroke-linecap="round" stroke-linejoin="round"><rect width="18" height="11" x="3" y="11" rx="2" ry="2"/><path d="M7 11V7a5 5 0 0 1 10 0v4"/></svg>
<text x="1164.0" y="547.3" font-size="12" fill="#ef6c00" font-weight="bold" text-anchor="middle">HTTP</text>
<text x="1164.0" y="556.8" font-size="9" fill="#e57373" font-weight="normal" text-anchor="middle">TCP 8080 (inbound)</text>
<rect x="1279.4" y="230.6" width="149.0" height="68.6" rx="10" fill="#e0f7fa" stroke="#00838f" stroke-width="2"/>
<svg x="1338.9" y="240.6" width="30" height="30" viewBox="0 0 24 24" fill="none" stroke="#616161" stroke-width="1.6" stroke-linecap="round" stroke-linejoin="round"><path d="M17.5 19H9a7 7 0 1 1 6.71-9h1.79a4.5 4.5 0 1 1 0 9Z"/></svg>
<text x="1353.9" y="287.6" font-size="12" fill="#005a5e" font-weight="bold" text-anchor="middle">Microsoft Office 365</text>
<text x="1353.9" y="297.2" font-size="9" fill="#1e88e5" font-weight="normal" text-anchor="middle">*.office365.com</text>
<rect x="1479.4" y="230.6" width="119.0" height="68.6" rx="10" fill="#e0f7fa" stroke="#00838f" stroke-width="2"/>
<svg x="1523.9" y="240.6" width="30" height="30" viewBox="0 0 24 24" fill="none" stroke="#616161" stroke-width="1.6" stroke-linecap="round" stroke-linejoin="round"><path d="M17.5 19H9a7 7 0 1 1 6.71-9h1.79a4.5 4.5 0 1 1 0 9Z"/></svg>
<text x="1538.9" y="287.6" font-size="12" fill="#005a5e" font-weight="bold" text-anchor="middle">SnagIt</text>
<text x="1538.9" y="297.2" font-size="9" fill="#1e88e5" font-weight="normal" text-anchor="middle">snagit.com</text>
<rect x="1619.2" y="300.6" width="69.59999999999991" height="68.19999999999999" rx="10" fill="#e0f7fa" stroke="#00838f" stroke-width="2"/>
<svg x="1639.0" y="310.6" width="30" height="30" viewBox="0 0 24 24" fill="none" stroke="#616161" stroke-width="1.6" stroke-linecap="round" stroke-linejoin="round"><path d="M17.5 19H9a7 7 0 1 1 6.71-9h1.79a4.5 4.5 0 1 1 0 9Z"/></svg>
<text x="1654.0" y="357.2" font-size="12" fill="#005a5e" font-weight="bold" text-anchor="middle">TBD</text>
<text x="1654.0" y="366.8" font-size="9" fill="#1e88e5" font-weight="normal" text-anchor="middle">TBD</text>
<rect x="1319.4" y="460.4" width="119.19999999999982" height="68.80000000000007" rx="10" fill="#e0f7fa" stroke="#00838f" stroke-width="2"/>
<svg x="1364.0" y="470.4" width="30" height="30" viewBox="0 0 24 24" fill="none" stroke="#616161" stroke-width="1.6" stroke-linecap="round" stroke-linejoin="round"><path d="M17.5 19H9a7 7 0 1 1 6.71-9h1.79a4.5 4.5 0 1 1 0 9Z"/></svg>
<text x="1379.0" y="517.6" font-size="12" fill="#005a5e" font-weight="bold" text-anchor="middle">TEst</text>
<text x="1379.0" y="527.2" font-size="9" fill="#1e88e5" font-weight="normal" text-anchor="middle">Test.com</text>
<rect x="1529.4" y="450.6" width="149.19999999999982" height="68.79999999999995" rx="10" fill="#e0f7fa" stroke="#00838f" stroke-width="2"/>
<svg x="1589.0" y="460.6" width="30" height="30" viewBox="0 0 24 24" fill="none" stroke="#616161" stroke-width="1.6" stroke-linecap="round" stroke-linejoin="round"><path d="M17.5 19H9a7 7 0 1 1 6.71-9h1.79a4.5 4.5 0 1 1 0 9Z"/></svg>
<text x="1604.0" y="507.8" font-size="12" fill="#005a5e" font-weight="bold" text-anchor="middle">Test Entry 4</text>
<text x="1604.0" y="517.4" font-size="9" fill="#1e88e5" font-weight="normal" text-anchor="middle">*.office.com</text>
<rect x="375.1" y="757.0" width="119.79999999999995" height="59.700000000000045" rx="10" fill="#e8f5e9" stroke="#2e7d32" stroke-width="2"/>
<svg x="425.0" y="767" width="20" height="20" viewBox="0 0 24 24" fill="none" stroke="#616161" stroke-width="2" stroke-linecap="round" stroke-linejoin="round"><rect width="20" height="8" x="2" y="2" rx="2" ry="2"/><rect width="20" height="8" x="2" y="14" rx="2" ry="2"/><line x1="6" x2="6.01" y1="6" y2="6"/><line x1="6" x2="6.01" y1="18" y2="18"/></svg>
<text x="435.0" y="804.2" font-size="10.6" fill="#2e7d32" font-weight="bold" text-anchor="middle">webserver-2</text>
<text x="435.0" y="813.7" font-size="9" fill="#66a86a" font-weight="normal" text-anchor="middle">10.0.0.8</text>
<rect x="535.2" y="757.0" width="119.79999999999995" height="59.700000000000045" rx="10" fill="#e8f5e9" stroke="#2e7d32" stroke-width="2"/>
<svg x="585.1" y="767" width="20" height="20" viewBox="0 0 24 24" fill="none" stroke="#616161" stroke-width="2" stroke-linecap="round" stroke-linejoin="round"><rect width="20" height="8" x="2" y="2" rx="2" ry="2"/><rect width="20" height="8" x="2" y="14" rx="2" ry="2"/><line x1="6" x2="6.01" y1="6" y2="6"/><line x1="6" x2="6.01" y1="18" y2="18"/></svg>
<text x="595.1" y="804.2" font-size="10.6" fill="#2e7d32" font-weight="bold" text-anchor="middle">webserver-3</text>
<text x="595.1" y="813.7" font-size="9" fill="#66a86a" font-weight="normal" text-anchor="middle">10.0.0.4</text>
<rect x="675.2" y="757.0" width="119.79999999999995" height="59.700000000000045" rx="10" fill="#e8f5e9" stroke="#2e7d32" stroke-width="2"/>
<svg x="725.1" y="767" width="20" height="20" viewBox="0 0 24 24" fill="none" stroke="#616161" stroke-width="2" stroke-linecap="round" stroke-linejoin="round"><rect width="20" height="8" x="2" y="2" rx="2" ry="2"/><rect width="20" height="8" x="2" y="14" rx="2" ry="2"/><line x1="6" x2="6.01" y1="6" y2="6"/><line x1="6" x2="6.01" y1="18" y2="18"/></svg>
<text x="735.1" y="804.2" font-size="10.6" fill="#2e7d32" font-weight="bold" text-anchor="middle">webserver-1</text>
<text x="735.1" y="813.7" font-size="9" fill="#66a86a" font-weight="normal" text-anchor="middle">10.1.0.4</text>
<rect x="395.2" y="877.2" width="119.80000000000001" height="59.59999999999991" rx="10" fill="#e8f5e9" stroke="#2e7d32" stroke-width="2"/>
<svg x="445.1" y="887.2" width="20" height="20" viewBox="0 0 24 24" fill="none" stroke="#616161" stroke-width="2" stroke-linecap="round" stroke-linejoin="round"><rect width="20" height="8" x="2" y="2" rx="2" ry="2"/><rect width="20" height="8" x="2" y="14" rx="2" ry="2"/><line x1="6" x2="6.01" y1="6" y2="6"/><line x1="6" x2="6.01" y1="18" y2="18"/></svg>
<text x="455.1" y="924.3" font-size="10.6" fill="#2e7d32" font-weight="bold" text-anchor="middle">webserver-4</text>
<text x="455.1" y="933.8" font-size="9" fill="#66a86a" font-weight="normal" text-anchor="middle">10.0.0.6</text>
<rect x="555.2" y="877.2" width="119.79999999999995" height="59.59999999999991" rx="10" fill="#e8f5e9" stroke="#2e7d32" stroke-width="2"/>
<svg x="605.1" y="887.2" width="20" height="20" viewBox="0 0 24 24" fill="none" stroke="#616161" stroke-width="2" stroke-linecap="round" stroke-linejoin="round"><rect width="20" height="8" x="2" y="2" rx="2" ry="2"/><rect width="20" height="8" x="2" y="14" rx="2" ry="2"/><line x1="6" x2="6.01" y1="6" y2="6"/><line x1="6" x2="6.01" y1="18" y2="18"/></svg>
<text x="615.1" y="924.3" font-size="10.6" fill="#2e7d32" font-weight="bold" text-anchor="middle">webserver-5</text>
<text x="615.1" y="933.8" font-size="9" fill="#66a86a" font-weight="normal" text-anchor="middle">10.0.0.5</text>
<rect x="725.2" y="877.2" width="119.79999999999995" height="59.59999999999991" rx="10" fill="#e8f5e9" stroke="#2e7d32" stroke-width="2"/>
<svg x="775.1" y="887.2" width="20" height="20" viewBox="0 0 24 24" fill="none" stroke="#616161" stroke-width="2" stroke-linecap="round" stroke-linejoin="round"><rect width="20" height="8" x="2" y="2" rx="2" ry="2"/><rect width="20" height="8" x="2" y="14" rx="2" ry="2"/><line x1="6" x2="6.01" y1="6" y2="6"/><line x1="6" x2="6.01" y1="18" y2="18"/></svg>
<text x="785.1" y="924.3" font-size="10.6" fill="#2e7d32" font-weight="bold" text-anchor="middle">webserver-6</text>
<text x="785.1" y="933.8" font-size="9" fill="#66a86a" font-weight="normal" text-anchor="middle">10.0.0.7</text>
<rect x="1015.4" y="757.4" width="129.0000000000001" height="69.0" rx="10" fill="#fff3e0" stroke="#f57c00" stroke-width="2"/>
<svg x="1064.9" y="767.4" width="30" height="30" viewBox="0 0 24 24" fill="none" stroke="#616161" stroke-width="1.6" stroke-linecap="round" stroke-linejoin="round"><ellipse cx="12" cy="5" rx="9" ry="3"/><path d="M3 5V19A9 3 0 0 0 21 19V5"/><path d="M3 12A9 3 0 0 0 21 12"/></svg>
<text x="1079.9" y="813.9" font-size="12" fill="#ef6c00" font-weight="bold" text-anchor="middle">SQLsvr</text>
<text x="1079.9" y="823.4" font-size="9" fill="#757575" font-weight="normal" text-anchor="middle">sqlsvr</text>
<rect x="1315.4" y="767.5" width="139.19999999999982" height="58.799999999999955" rx="10" fill="#e8f5e9" stroke="#2e7d32" stroke-width="2"/>
<svg x="1375.0" y="777.5" width="20" height="20" viewBox="0 0 24 24" fill="none" stroke="#616161" stroke-width="2" stroke-linecap="round" stroke-linejoin="round"><rect width="20" height="8" x="2" y="2" rx="2" ry="2"/><rect width="20" height="8" x="2" y="14" rx="2" ry="2"/><line x1="6" x2="6.01" y1="6" y2="6"/><line x1="6" x2="6.01" y1="18" y2="18"/></svg>
<text x="1385.0" y="814.0" font-size="10.6" fill="#2e7d32" font-weight="bold" text-anchor="middle">rmf-o-avd-0</text>
<rect x="1485.4" y="787.5" width="139.19999999999982" height="58.799999999999955" rx="10" fill="#e8f5e9" stroke="#2e7d32" stroke-width="2"/>
<svg x="1545.0" y="797.5" width="20" height="20" viewBox="0 0 24 24" fill="none" stroke="#616161" stroke-width="2" stroke-linecap="round" stroke-linejoin="round"><rect width="20" height="8" x="2" y="2" rx="2" ry="2"/><rect width="20" height="8" x="2" y="14" rx="2" ry="2"/><line x1="6" x2="6.01" y1="6" y2="6"/><line x1="6" x2="6.01" y1="18" y2="18"/></svg>
<text x="1555.0" y="834.0" font-size="10.6" fill="#2e7d32" font-weight="bold" text-anchor="middle">rmf-o-vm-pyclie</text>
<rect x="1355.2" y="887.5" width="129.39999999999986" height="58.799999999999955" rx="10" fill="#eceff1" stroke="#455a64" stroke-width="2"/>
<svg x="1409.9" y="897.5" width="20" height="20" viewBox="0 0 24 24" fill="none" stroke="#616161" stroke-width="2" stroke-linecap="round" stroke-linejoin="round"><rect width="20" height="14" x="2" y="3" rx="2"/><line x1="8" x2="16" y1="21" y2="21"/><line x1="12" x2="12" y1="17" y2="21"/></svg>
<text x="1419.9" y="934.0" font-size="11" fill="#263238" font-weight="normal" text-anchor="middle">Test Asset 1</text>
<rect x="1525.2" y="887.5" width="139.5999999999999" height="58.799999999999955" rx="10" fill="#e8f5e9" stroke="#2e7d32" stroke-width="2"/>
<svg x="1585.0" y="897.5" width="20" height="20" viewBox="0 0 24 24" fill="none" stroke="#616161" stroke-width="2" stroke-linecap="round" stroke-linejoin="round"><rect width="20" height="8" x="2" y="2" rx="2" ry="2"/><rect width="20" height="8" x="2" y="14" rx="2" ry="2"/><line x1="6" x2="6.01" y1="6" y2="6"/><line x1="6" x2="6.01" y1="18" y2="18"/></svg>
<text x="1595.0" y="934.0" font-size="10.6" fill="#2e7d32" font-weight="bold" text-anchor="middle">dotnet-vm-01</text>
<line x1="459.70" y1="299.27" x2="1020.13" y2="403.08" stroke="#616161" stroke-width="2"/>
<polygon points="1028.00,404.54 1017.17,408.12 1019.17,397.31" fill="#616161"/>
<line x1="579.60" y1="298.93" x2="1020.20" y2="400.24" stroke="#616161" stroke-width="2"/>
<polygon points="1028.00,402.04 1017.02,405.15 1019.49,394.43" fill="#616161"/>
<line x1="709.80" y1="303.65" x2="1020.33" y2="395.98" stroke="#616161" stroke-width="2"/>
<polygon points="1028.00,398.26 1016.85,400.69 1019.98,390.14" fill="#616161"/>
<line x1="1072.20" y1="300.90" x2="1079.42" y2="370.94" stroke="#546e7a" stroke-width="2"/>
<polygon points="1080.24,378.90 1073.74,369.52 1084.69,368.39" fill="#546e7a"/>
<line x1="1028.00" y1="421.34" x2="927.55" y2="432.89" stroke="#546e7a" stroke-width="2"/>
<polygon points="919.60,433.81 928.91,427.20 930.16,438.13" fill="#546e7a"/>
<line x1="1146.76" y1="509.10" x2="1112.39" y2="457.56" stroke="#f9a825" stroke-width="2" stroke-dasharray="4,4"/>
<polygon points="1107.95,450.90 1118.08,456.17 1108.93,462.27" fill="#f9a825"/>
<line x1="1139.90" y1="383.81" x2="1283.38" y2="304.09" stroke="#00796b" stroke-width="2"/>
<polygon points="1290.37,300.20 1284.30,309.86 1278.96,300.25" fill="#00796b"/>
<line x1="1139.90" y1="396.45" x2="1470.80" y2="287.35" stroke="#00796b" stroke-width="2"/>
<polygon points="1478.40,284.85 1470.63,293.20 1467.18,282.76" fill="#00796b"/>
<line x1="1139.90" y1="407.03" x2="1610.28" y2="340.85" stroke="#00796b" stroke-width="2"/>
<polygon points="1618.20,339.74 1609.06,346.58 1607.53,335.68" fill="#00796b"/>
<line x1="1139.90" y1="430.05" x2="1310.68" y2="476.30" stroke="#00796b" stroke-width="2"/>
<polygon points="1318.40,478.39 1307.31,481.08 1310.19,470.47" fill="#00796b"/>
<line x1="1139.90" y1="422.44" x2="1520.47" y2="473.74" stroke="#00796b" stroke-width="2"/>
<polygon points="1528.40,474.81 1517.75,478.92 1519.22,468.02" fill="#00796b"/>
<line x1="830.38" y1="470.40" x2="479.79" y2="751.00" stroke="#616161" stroke-width="2"/>
<polygon points="473.54,756.00 477.92,745.46 484.79,754.05" fill="#616161"/>
<line x1="856.96" y1="470.40" x2="749.85" y2="748.53" stroke="#616161" stroke-width="2"/>
<polygon points="746.98,756.00 745.44,744.69 755.71,748.64" fill="#616161"/>
<line x1="863.29" y1="470.40" x2="792.03" y2="868.33" stroke="#616161" stroke-width="2"/>
<polygon points="790.62,876.20 786.97,865.39 797.79,867.33" fill="#616161"/>
<line x1="887.23" y1="470.40" x2="1054.51" y2="749.54" stroke="#616161" stroke-width="2"/>
<polygon points="1058.63,756.40 1048.77,750.65 1058.20,745.00" fill="#616161"/>
<line x1="904.31" y1="470.40" x2="1378.75" y2="881.26" stroke="#616161" stroke-width="2"/>
<polygon points="1384.80,886.50 1373.64,884.11 1380.84,875.80" fill="#616161"/>
<line x1="913.23" y1="470.40" x2="1334.50" y2="761.95" stroke="#616161" stroke-width="2"/>
<polygon points="1341.07,766.50 1329.72,765.33 1335.98,756.29" fill="#616161"/>
<line x1="919.60" y1="467.58" x2="1492.69" y2="782.65" stroke="#616161" stroke-width="2"/>
<polygon points="1499.70,786.50 1488.29,786.50 1493.59,776.86" fill="#616161"/>
<line x1="796.00" y1="787.74" x2="1006.40" y2="790.82" stroke="#8d6e63" stroke-width="2" stroke-dasharray="5,5"/>
<polygon points="1014.40,790.94 1004.32,796.29 1004.48,785.29" fill="#8d6e63"/>
<line x1="846.00" y1="883.22" x2="1006.95" y2="820.38" stroke="#8d6e63" stroke-width="2" stroke-dasharray="5,5"/>
<polygon points="1014.40,817.47 1007.09,826.23 1003.08,815.99" fill="#8d6e63"/>
<rect x="718.85" y="345.6" width="50" height="12.6" rx="3" fill="#ffffff" stroke="none" stroke-width="1" fill-opacity="0.95"/>
<text x="743.85" y="355.2" font-size="9.6" fill="#333333" font-weight="normal" text-anchor="middle" textLength="46" lengthAdjust="spacingAndGlyphs">HTTPS:443</text>
<rect x="778.8" y="344.18" width="50" height="12.6" rx="3" fill="#ffffff" stroke="none" stroke-width="1" fill-opacity="0.95"/>
<text x="803.8" y="353.78" font-size="9.6" fill="#333333" font-weight="normal" text-anchor="middle" textLength="46" lengthAdjust="spacingAndGlyphs">HTTPS:443</text>
<rect x="843.9" y="344.66" width="50" height="12.6" rx="3" fill="#ffffff" stroke="none" stroke-width="1" fill-opacity="0.95"/>
<text x="868.9" y="354.26" font-size="9.6" fill="#333333" font-weight="normal" text-anchor="middle" textLength="46" lengthAdjust="spacingAndGlyphs">HTTPS:443</text>
<rect x="1062.32" y="325.1" width="25.8" height="12.6" rx="3" fill="#ffffff" stroke="none" stroke-width="1" fill-opacity="0.95"/>
<text x="1075.22" y="334.7" font-size="9.6" fill="#333333" font-weight="normal" text-anchor="middle" textLength="21.8" lengthAdjust="spacingAndGlyphs">WAN</text>
<rect x="944.6" y="422.17" width="36.8" height="12.6" rx="3" fill="#ffffff" stroke="none" stroke-width="1" fill-opacity="0.95"/>
<text x="963.0" y="431.77" font-size="9.6" fill="#333333" font-weight="normal" text-anchor="middle" textLength="32.8" lengthAdjust="spacingAndGlyphs">Internal</text>
<rect x="1085.41" y="473.7" width="83.9" height="12.6" rx="3" fill="#ffffff" stroke="none" stroke-width="1" fill-opacity="0.95"/>
<text x="1127.36" y="483.3" font-size="9.6" fill="#d32f2f" font-weight="normal" text-anchor="middle" textLength="79.9" lengthAdjust="spacingAndGlyphs">TCP 8080 inbound</text>
<rect x="1175.64" y="335.71" width="79" height="12.6" rx="3" fill="#ffffff" stroke="none" stroke-width="1" fill-opacity="0.95"/>
<text x="1215.14" y="345.31" font-size="9.6" fill="#00695c" font-weight="normal" text-anchor="middle" textLength="75" lengthAdjust="spacingAndGlyphs">HTTPS outbound</text>
<rect x="1269.65" y="334.35" width="79" height="12.6" rx="3" fill="#ffffff" stroke="none" stroke-width="1" fill-opacity="0.95"/>
<text x="1309.15" y="343.95" font-size="9.6" fill="#00695c" font-weight="normal" text-anchor="middle" textLength="75" lengthAdjust="spacingAndGlyphs">HTTPS outbound</text>
<rect x="1339.55" y="367.08" width="79" height="12.6" rx="3" fill="#ffffff" stroke="none" stroke-width="1" fill-opacity="0.95"/>
<text x="1379.05" y="376.68" font-size="9.6" fill="#00695c" font-weight="normal" text-anchor="middle" textLength="75" lengthAdjust="spacingAndGlyphs">HTTPS outbound</text>
<rect x="1205.4" y="447.92" width="47.5" height="12.6" rx="3" fill="#ffffff" stroke="none" stroke-width="1" fill-opacity="0.95"/>
<text x="1229.15" y="457.52" font-size="9.6" fill="#00695c" font-weight="normal" text-anchor="middle" textLength="43.5" lengthAdjust="spacingAndGlyphs">outbound</text>
<rect x="1289.3" y="442.33" width="89.7" height="12.6" rx="3" fill="#ffffff" stroke="none" stroke-width="1" fill-opacity="0.95"/>
<text x="1334.15" y="451.93" font-size="9.6" fill="#00695c" font-weight="normal" text-anchor="middle" textLength="85.7" lengthAdjust="spacingAndGlyphs">bidirectional 80,443</text>
<rect x="883.2" y="783.04" width="44" height="12.6" rx="3" fill="#ffffff" stroke="none" stroke-width="1" fill-opacity="0.95"/>
<text x="905.2" y="792.64" font-size="9.6" fill="#424242" font-weight="normal" text-anchor="middle" textLength="40" lengthAdjust="spacingAndGlyphs">DB traffic</text>
<rect x="908.2" y="844.05" width="44" height="12.6" rx="3" fill="#ffffff" stroke="none" stroke-width="1" fill-opacity="0.95"/>
<text x="930.2" y="853.65" font-size="9.6" fill="#424242" font-weight="normal" text-anchor="middle" textLength="40" lengthAdjust="spacingAndGlyphs">DB traffic</text>
<rect x="246" y="122.8" width="199.2" height="32" rx="4" fill="#ffffff" fill-opacity="0.95" stroke="#e5e7eb" stroke-width="1" filter="url(#sh)"/>
<text x="256.6" y="145" font-size="13" fill="#374151" font-weight="normal" text-anchor="start" textLength="178" lengthAdjust="spacingAndGlyphs">Tool: select | Elements: 0 | Ready</text>
<circle cx="1855.5" cy="1043.5" r="20.5" fill="#ffffff" stroke="#eef0f2" stroke-width="1" filter="url(#sh2)"/>
<svg x="1845.5" y="1034" width="21" height="21" viewBox="0 0 24 24" fill="none" stroke="#263238" stroke-width="2" stroke-linecap="round" stroke-linejoin="round"><path d="M21 15a2 2 0 0 1-2 2H7l-4 4V5a2 2 0 0 1 2-2h14a2 2 0 0 1 2 2z"/></svg>
</svg>
</body></html>
